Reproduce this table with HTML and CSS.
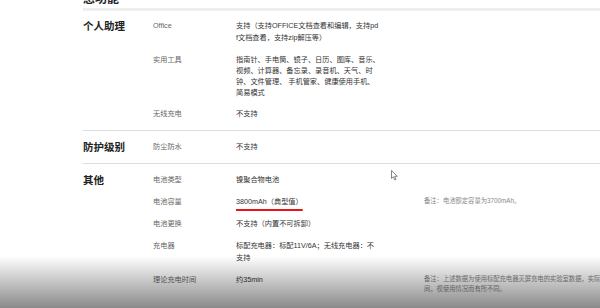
FILE: index.html
```html
<!DOCTYPE html>
<html lang="zh-CN">
<head>
  <meta charset="UTF-8">
  <meta name="viewport" content="width=device-width, initial-scale=1.0">
  <title>规格参数</title>
  <link rel="stylesheet" href="styles.css">
</head>
<body>
  <div class="specs">
    <h1 class="specs-title">息功能</h1>

    <section class="spec-group">
      <h2 class="group-name">个人助理</h2>
      <div class="group-rows">
        <div class="spec-row">
          <div class="spec-key">Office</div>
          <div class="spec-val">支持（支持OFFICE文档查看和编辑，支持pdf文档查看，支持zip解压等）</div>
        </div>
        <div class="spec-row tight">
          <div class="spec-key">实用工具</div>
          <div class="spec-val">指南针、手电筒、镜子、日历、图库、音乐、视频、计算器、备忘录、录音机、天气、时钟、文件管理、 手机管家、健康使用手机、简易模式</div>
        </div>
        <div class="spec-row">
          <div class="spec-key">无线充电</div>
          <div class="spec-val">不支持</div>
        </div>
      </div>
    </section>

    <section class="spec-group">
      <h2 class="group-name">防护级别</h2>
      <div class="group-rows">
        <div class="spec-row">
          <div class="spec-key">防尘防水</div>
          <div class="spec-val">不支持</div>
        </div>
      </div>
    </section>

    <section class="spec-group">
      <h2 class="group-name">其他</h2>
      <div class="group-rows">
        <div class="spec-row">
          <div class="spec-key">电池类型</div>
          <div class="spec-val">镍聚合物电池</div>
        </div>
        <div class="spec-row">
          <div class="spec-key">电池容量</div>
          <div class="spec-val"><span class="marked">3800mAh（典型值）</span></div>
          <div class="spec-note">备注：电池额定容量为3700mAh。</div>
        </div>
        <div class="spec-row">
          <div class="spec-key">电池更换</div>
          <div class="spec-val">不支持（内置不可拆卸）</div>
        </div>
        <div class="spec-row">
          <div class="spec-key">充电器</div>
          <div class="spec-val">标配充电器：标配11V/6A；无线充电器：不<br>支持</div>
        </div>
        <div class="spec-row">
          <div class="spec-key">理论充电时间</div>
          <div class="spec-val">约35min</div>
          <div class="spec-note">备注：上述数据为使用标配充电器灭屏充电的实验室数据，实际充电时间，视使用情况而有所不同。</div>
        </div>
      </div>
    </section>
  </div>

  <!-- mouse pointer -->
  <svg class="pointer" width="7" height="11" viewBox="0 0 7 11">
    <path d="M0.5 0.5 L0.5 8.5 L2.4 6.8 L3.8 10 L5 9.4 L3.7 6.3 L6.3 6.3 Z" fill="#fff" stroke="#777" stroke-width="0.9" stroke-linejoin="round"/>
  </svg>

  <div class="fade"></div>
</body>
</html>
```

FILE: styles.css
```css
html, body {
  margin: 0;
  overflow: hidden;
  background: #fff;
}
body {
  font-family: "Liberation Sans", "Noto Sans CJK SC", sans-serif;
  color: #333;
}
.specs {
  margin-left: 83px;
  margin-top: -8px;
}
.specs-title {
  margin: 0;
  font-size: 12px;
  line-height: 14px;
  font-weight: bold;
  color: #222;
  padding-bottom: 2px;
  border-bottom: 3px solid #eee;
}
.spec-group {
  display: flex;
  padding: 5px 0;
  border-top: 1px solid #ddd;
}
.specs-title + .spec-group {
  border-top: none;
  padding-top: 4px;
  padding-bottom: 5px;
}
.group-name {
  width: 70px;
  flex-shrink: 0;
  margin: 0;
  padding-top: 5px;
  font-size: 10.5px;
  line-height: 12px;
  font-weight: bold;
  color: #222;
}
.group-rows {
  flex: 1;
}
.spec-row {
  display: grid;
  grid-template-columns: 83px 144px 1fr;
  padding: 5.25px 0;
  font-size: 7.2px;
  line-height: 11.5px;
}
.spec-row.tight {
  line-height: 11px;
}
.spec-key {
  color: #666;
}
.spec-val {
  color: #333;
  word-break: break-all;
}
.spec-note {
  padding-left: 44px;
  width: 203px;
  font-size: 6.3px;
  line-height: 10.5px;
  color: #888;
}
.marked {
  text-decoration: underline;
  text-decoration-color: #e8141c;
  text-decoration-thickness: 2px;
  text-underline-offset: 5px;
}
.pointer {
  position: absolute;
  left: 391px;
  top: 170px;
}
.fade {
  position: fixed;
  left: 0;
  right: 0;
  bottom: 0;
  height: 52px;
  background: linear-gradient(to bottom, rgba(0, 0, 0, 0), rgba(0, 0, 0, 0.46));
}
```
